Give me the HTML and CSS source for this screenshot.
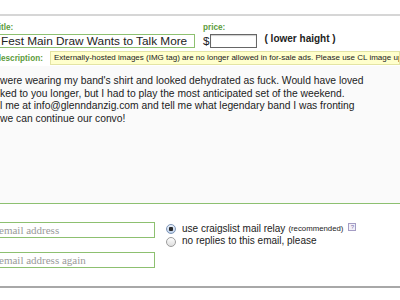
FILE: index.html
```html
<!DOCTYPE html>
<html lang="en">
<head>
    <meta charset="UTF-8">
    <title>Posting Form</title>
    <link rel="stylesheet" href="styles.css">
</head>
<body>
    <div class="rule rule-top"></div>

    <form class="post">
        <div class="head">
            <div class="title-field">
                <span class="lbl">title:</span>
                <div class="box title-box">Fest Main Draw Wants to Talk More</div>
            </div>
            <div class="price-field">
                <span class="lbl">price:</span>
                <div class="price-line">
                    <span class="dollar">$</span>
                    <span class="box price-box"></span>
                </div>
            </div>
            <div class="hood">( lower haight )</div>
        </div>

        <div class="desc">
            <span class="lbl desc-lbl">description:</span>
            <span class="notice">Externally-hosted images (IMG tag) are no longer allowed in for-sale ads. Please use CL image upload.</span>
        </div>

        <div class="body-text">were wearing my band's shirt and looked dehydrated as fuck. Would have loved
ked to you longer, but I had to play the most anticipated set of the weekend.
l me at info@glenndanzig.com and tell me what legendary band I was fronting
we can continue our convo!</div>

        <div class="contact">
            <div class="emails">
                <div class="box email">email address</div>
                <div class="box email">email address again</div>
            </div>
            <div class="relay">
                <div class="opt"><span class="radio checked"></span>use craigslist mail relay <small>(recommended)</small> <span class="help">?</span></div>
                <div class="opt"><span class="radio"></span>no replies to this email, please</div>
            </div>
        </div>
    </form>

    <div class="rule rule-bottom"></div>
</body>
</html>
```

FILE: styles.css
```css
body {
    margin: 0;
    font-family: "Liberation Sans", Arial, sans-serif;
    color: #222;
    background-color: #ffffff;
    overflow: hidden;
}
.rule {
    height: 2px;
}
.rule-top {
    margin-top: 14px;
    background-color: #d6d6d6;
}
.rule-bottom {
    margin-top: 18px;
    background-color: #a8a8a8;
}
.post {
    margin-left: -4px;
}
.lbl {
    display: block;
    height: 11px;
    font-size: 8.2px;
    line-height: 11px;
    font-weight: bold;
    color: #5c9b3c;
}
.box {
    box-sizing: border-box;
    border: 1px solid #8dc070;
    background-color: #fff;
}
.head {
    display: flex;
    align-items: flex-start;
    margin-top: 6px;
}
.title-box {
    width: 199px;
    height: 14px;
    margin-top: 1px;
    padding-left: 4px;
    font-size: 11.8px;
    line-height: 12px;
    white-space: nowrap;
    overflow: hidden;
}
.price-field {
    margin-left: 8px;
}
.price-line {
    display: flex;
    margin-top: 1px;
}
.dollar {
    font-size: 11.7px;
    line-height: 14px;
}
.price-box {
    width: 47px;
    height: 14px;
    border-color: #666;
    box-shadow: inset 0 1px 1px #ccc;
}
.hood {
    margin-left: 8px;
    margin-top: 11px;
    font-size: 10px;
    font-weight: bold;
}
.desc {
    display: flex;
    align-items: center;
    height: 14px;
    margin-top: 3px;
}
.desc-lbl {
    flex: 0 0 54px;
}
.notice {
    flex: 1;
    box-sizing: border-box;
    height: 14px;
    padding: 0 3px;
    border: 1px solid #e4e4a4;
    background-color: #ffffcc;
    font-size: 8px;
    line-height: 12px;
    white-space: nowrap;
    overflow: hidden;
}
.body-text {
    box-sizing: border-box;
    height: 138px;
    margin-top: 1px;
    padding: 9px 0 0 4px;
    background-color: #fafafa;
    border-bottom: 1px solid #8dc070;
    font-size: 10.3px;
    line-height: 12.5px;
    white-space: pre;
    overflow: hidden;
}
.contact {
    display: flex;
    margin-top: 18px;
}
.emails {
    width: 159px;
}
.email {
    height: 16px;
    padding-left: 2px;
    font-family: "Liberation Serif", "Times New Roman", serif;
    font-size: 11px;
    line-height: 15px;
    color: #9a9a9a;
}
.email + .email {
    margin-top: 14px;
}
.relay {
    margin-left: 11px;
    margin-top: 1px;
    font-size: 10px;
    line-height: 12.4px;
}
.opt {
    display: flex;
    align-items: center;
    white-space: nowrap;
}
.opt small {
    font-size: 7.8px;
    margin-left: 3px;
}
.radio {
    box-sizing: border-box;
    width: 10px;
    height: 10px;
    margin-right: 6px;
    border: 1px solid #9c9c9c;
    border-radius: 50%;
    background: linear-gradient(#fdfdfd, #dedede);
}
.radio.checked {
    border-color: #7e96b8;
    background: radial-gradient(circle, #2a2a2a 0 2px, transparent 2.5px), linear-gradient(#eaf1fb, #bfd0e8);
}
.help {
    box-sizing: border-box;
    width: 8px;
    height: 8px;
    margin: -4px 0 0 5px;
    border: 1px solid #a49cc4;
    background-color: #f2f0f8;
    color: #7a72a8;
    font-size: 6px;
    line-height: 6px;
    text-align: center;
}
```
